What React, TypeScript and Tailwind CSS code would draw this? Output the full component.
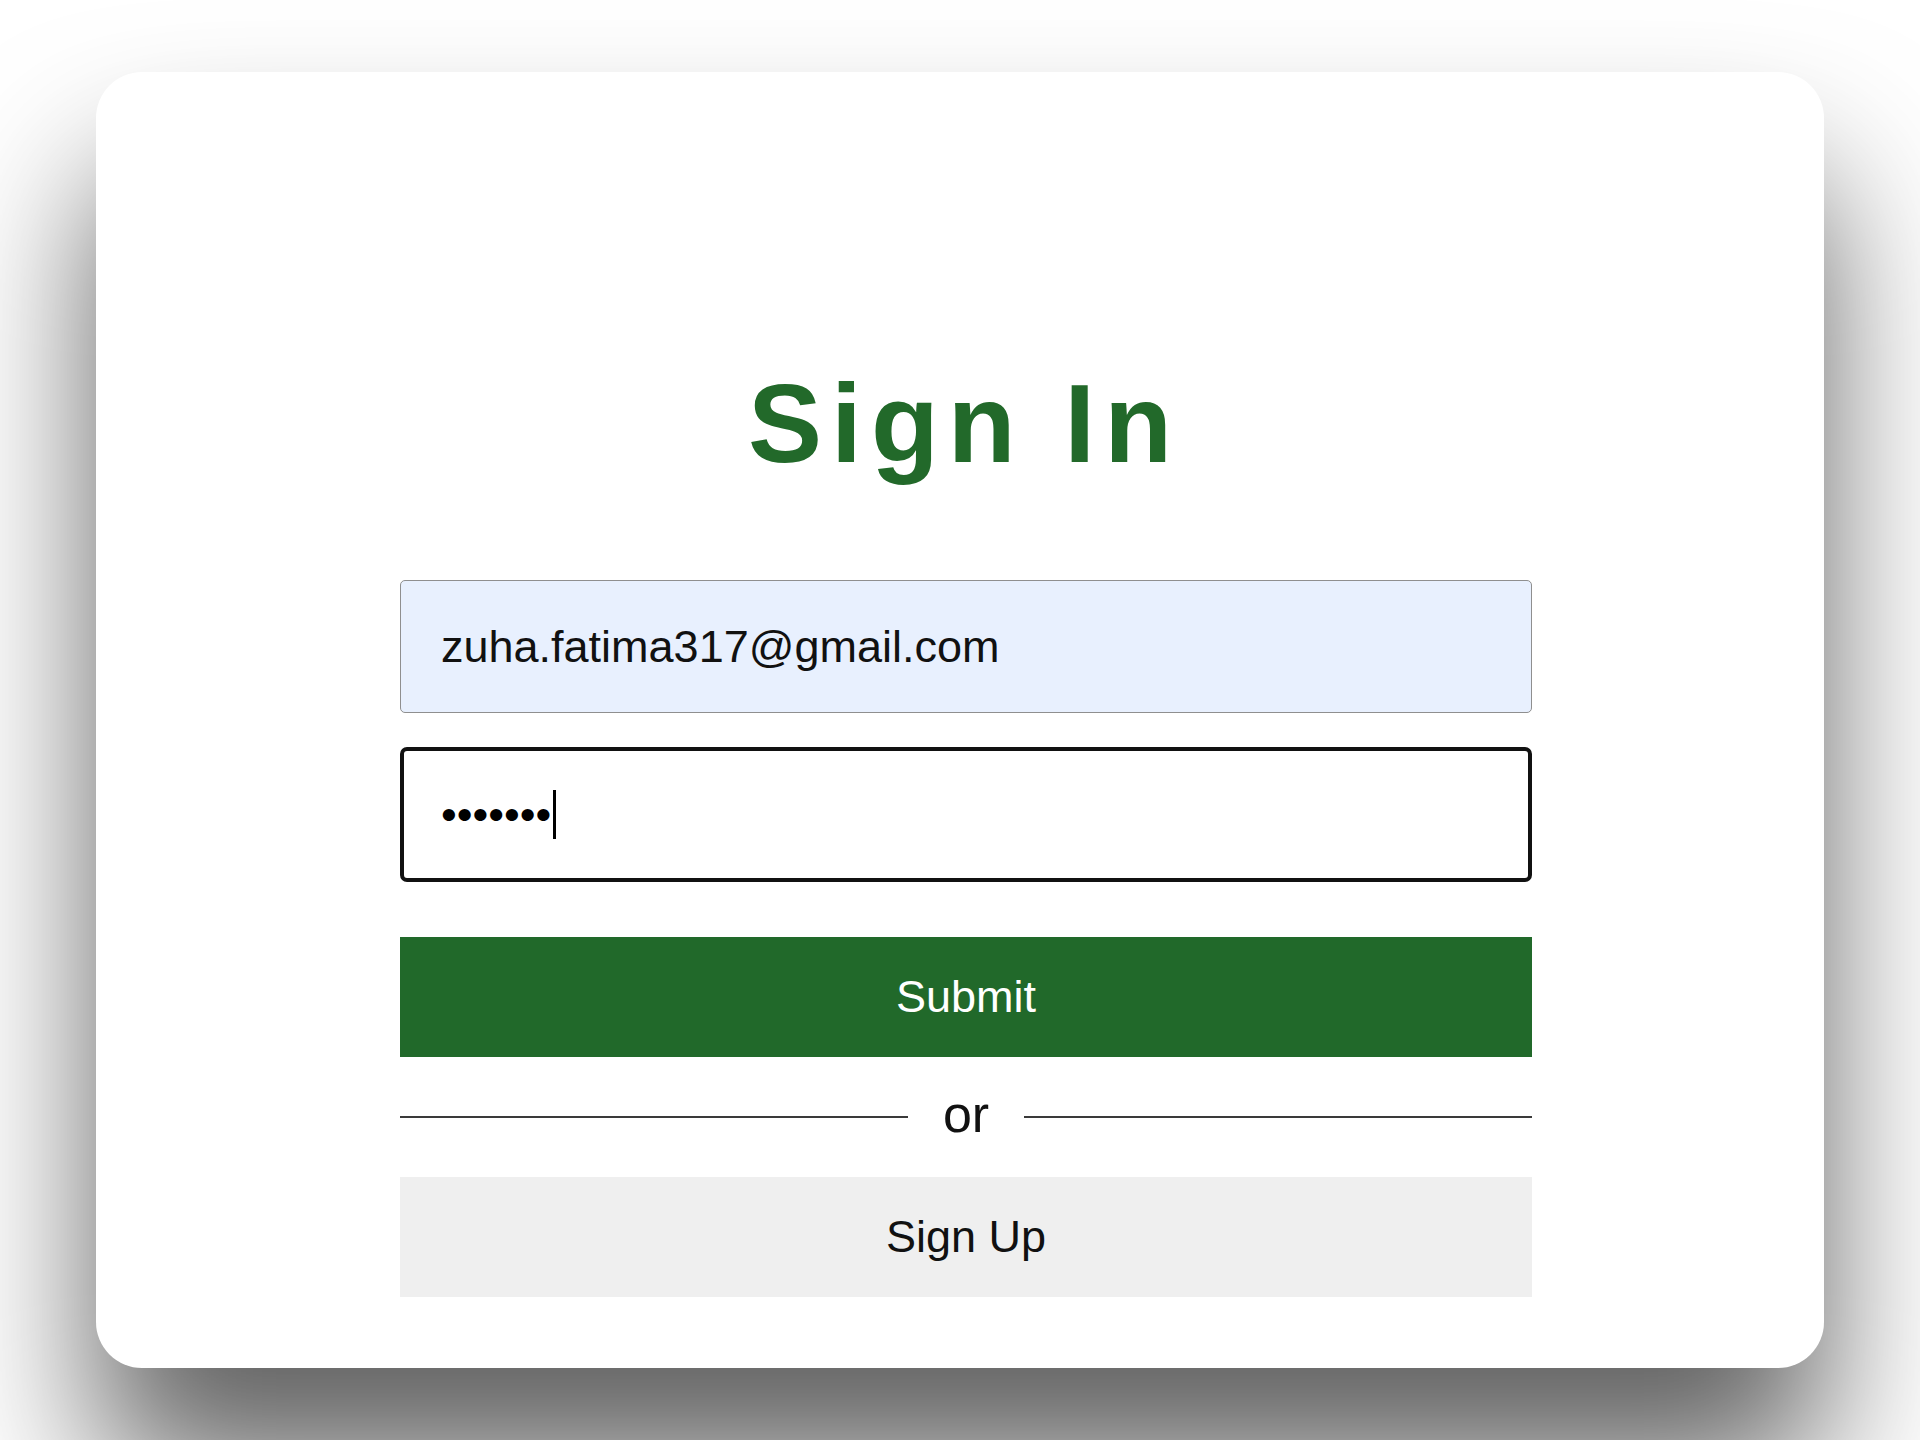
import React from 'react';

const font = { fontFamily: '"Liberation Sans", Arial, sans-serif' };

export default function App() {
  return (
    <div className="min-h-[1440px] w-full bg-white flex justify-center pt-[72px]" style={font}>
      {/* Card */}
      <div className="w-[1728px] h-[1296px] rounded-[46px] bg-white shadow-[0_105px_150px_rgba(0,0,0,0.62)] pt-[297px]">
        <h1 className="text-center text-[111px] leading-none font-bold tracking-[9px] pl-[9px] text-[#22692a]">
          Sign In
        </h1>

        <form className="ml-[304px] w-[1132px] mt-[100px] flex flex-col" onSubmit={(e) => e.preventDefault()}>
          {/* Email */}
          <input
            type="email"
            readOnly
            value="zuha.fatima317@gmail.com"
            className="h-[133px] w-full rounded-[5px] border border-[#8f8f8f] bg-[#e8f0fe] pl-[40px] text-[45px] text-[#111] outline-none"
            style={font}
          />

          {/* Password (focused) */}
          <div className="mt-[34px] h-[135px] w-full rounded-[7px] border-[4px] border-[#111] bg-white pl-[37px] flex items-center">
            <span className="text-[45px] leading-none text-black">•••••••</span>
            <span className="ml-[2px] w-[3px] h-[49px] bg-black" />
          </div>

          {/* Submit */}
          <button
            type="submit"
            className="mt-[55px] h-[120px] w-full bg-[#21692a] text-white text-[45px]"
            style={font}
          >
            Submit
          </button>

          {/* Divider */}
          <div className="h-[120px] flex items-center">
            <div className="flex-1 h-[2px] bg-[#3a3a3a]" />
            <span className="mx-[35px] text-[52px] leading-none text-[#111] -mt-[6px]">or</span>
            <div className="flex-1 h-[2px] bg-[#3a3a3a]" />
          </div>

          {/* Sign up */}
          <button type="button" className="h-[120px] w-full bg-[#efefef] text-[45px] text-[#111]" style={font}>
            Sign Up
          </button>
        </form>
      </div>
    </div>
  );
}
